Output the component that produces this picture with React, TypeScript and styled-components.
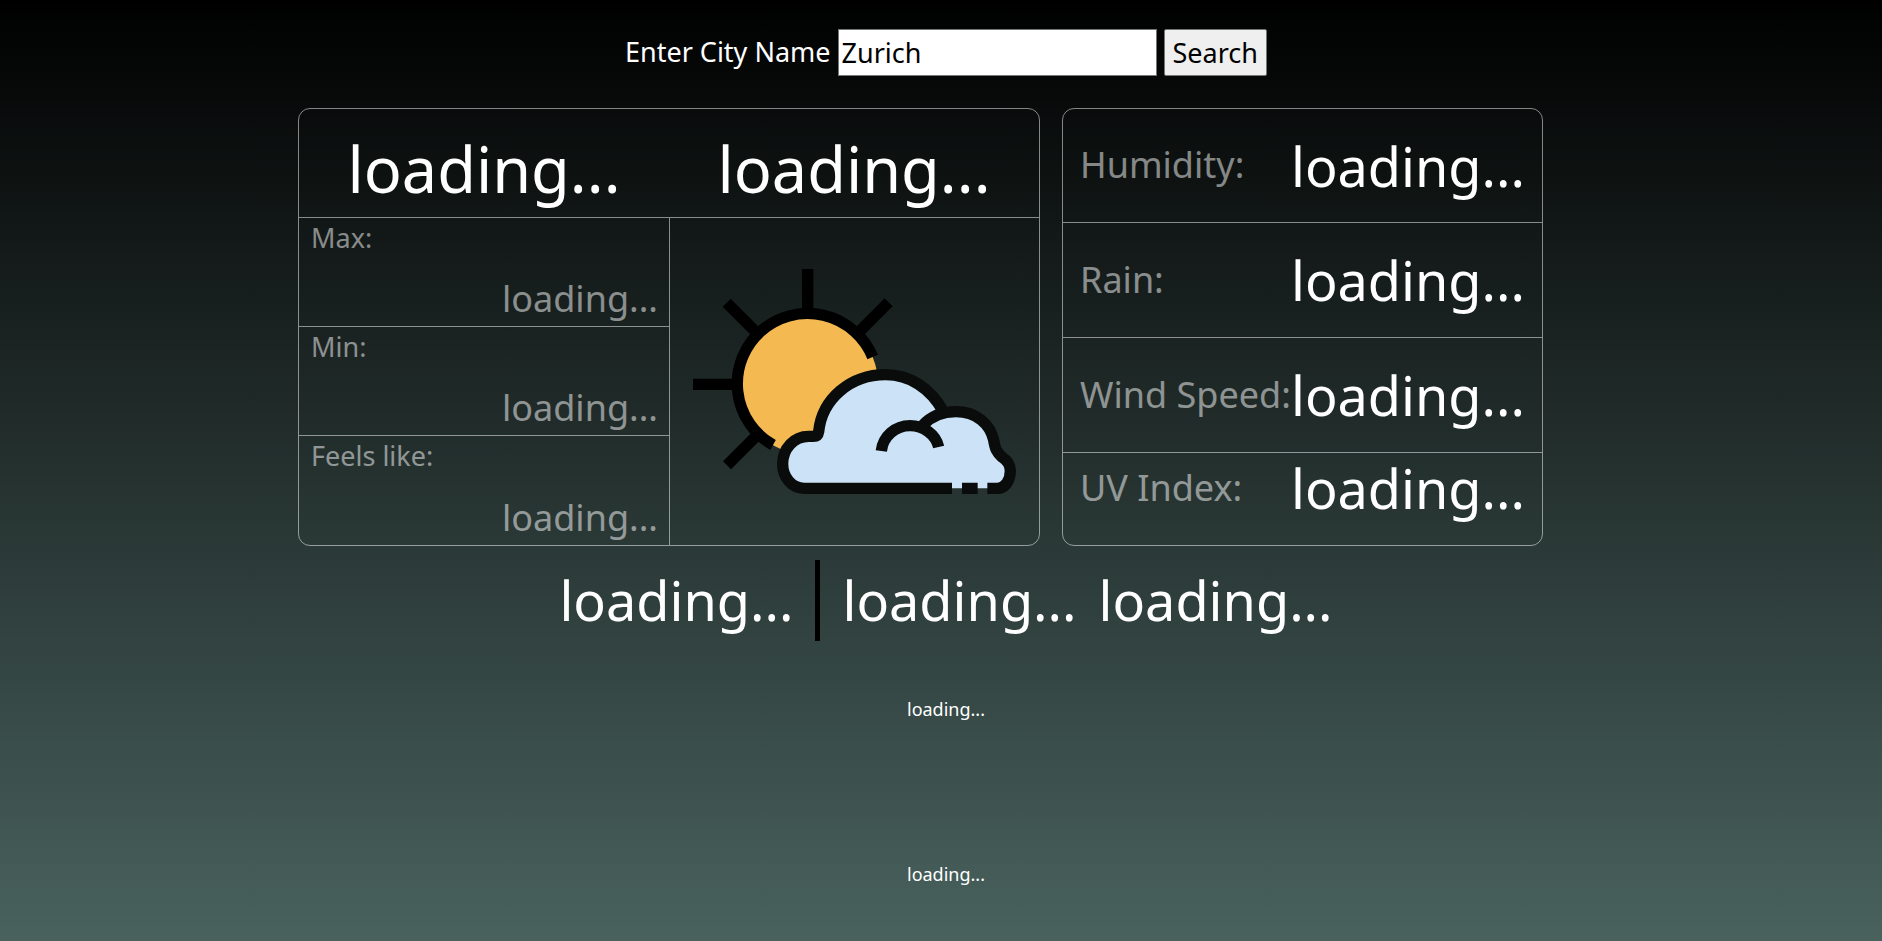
import React, { useState } from "react";
import styled, { createGlobalStyle } from "styled-components";

const line = "1px solid rgba(255, 255, 255, 0.5)";

const GlobalStyle = createGlobalStyle`
  * { box-sizing: border-box; }
  body {
    margin: 0;
    font-family: "Noto Sans", sans-serif;
    font-size: 18px;
    line-height: 25px;
    color: #fff;
  }
`;

const Page = styled.main`
  min-height: 100vh;
  padding: 29px 0 50px 10px;
  display: flex;
  flex-direction: column;
  align-items: center;
  background: linear-gradient(#000, #49625e);
`;

const SearchForm = styled.form`
  display: flex;
  align-items: center;
  gap: 7px;
  font-size: 27px;
  line-height: 37px;
`;

const CityLabel = styled.label`
  padding-bottom: 2px;
`;

const CityInput = styled.input`
  width: 319px;
  height: 47px;
  padding: 2px 3px;
  border: 1px solid #767676;
  border-radius: 0;
  background: #fff;
  color: #000;
  font: inherit;
`;

const SearchButton = styled.button`
  height: 47px;
  padding: 0 8px;
  border: 1px solid #767676;
  border-radius: 2px;
  background: #efefef;
  color: #000;
  font: inherit;
`;

const Panels = styled.div`
  width: 100%;
  max-width: 1245px;
  margin: 32px 51px 0 0;
  display: grid;
  grid-template-columns: minmax(0, 742fr) minmax(0, 481fr);
  gap: 22px;
`;

const Panel = styled.section`
  border: ${line};
  border-radius: 12px;
`;

const CurrentPanel = styled(Panel)`
  display: grid;
  grid-template-columns: 1fr 1fr;
  grid-template-rows: 109px auto;
`;

const DetailsPanel = styled(Panel)`
  display: grid;
  grid-template-rows: 114px 115px 115px 70px;
`;

const Headline = styled.header`
  grid-column: 1 / -1;
  display: grid;
  grid-template-columns: 1fr 1fr;
  align-items: center;
  padding-top: 12px;
  border-bottom: ${line};
  text-align: center;
  font-size: 63px;
  line-height: 86px;
`;

const Temperatures = styled.div`
  display: flex;
  flex-direction: column;
`;

const Temperature = styled.div`
  height: 109px;
  padding: 1px 11px 3px 12px;
  display: flex;
  flex-direction: column;
  justify-content: space-between;
  color: rgba(255, 255, 255, 0.5);
  &:not(:last-child) {
    border-bottom: ${line};
  }
`;

const TemperatureLabel = styled.span`
  font-size: 27px;
  line-height: 37px;
`;

const TemperatureValue = styled.span`
  align-self: flex-end;
  font-size: 36px;
  line-height: 49px;
`;

const Artwork = styled.div`
  display: flex;
  align-items: center;
  justify-content: center;
  border-left: ${line};
`;

const DetailRow = styled.div`
  padding: 0 17px;
  display: flex;
  align-items: center;
  justify-content: space-between;
  white-space: nowrap;
  &:not(:last-child) {
    border-bottom: ${line};
  }
`;

const DetailLabel = styled.span`
  padding-bottom: 2px;
  color: rgba(255, 255, 255, 0.5);
  font-size: 36px;
  line-height: 49px;
`;

const DetailValue = styled.span`
  font-size: 54px;
  line-height: 74px;
`;

const Place = styled.div`
  margin-top: 14px;
  display: flex;
  align-items: flex-start;
  font-size: 54px;
  line-height: 81px;
`;

const Time = styled.span`
  padding-right: 22px;
  margin-right: 22px;
  border-right: 5px solid #000;
`;

const City = styled.span`
  margin-right: 22px;
`;

const Notes = styled.div`
  margin-top: 56px;
  display: grid;
  gap: 140px;
  text-align: center;
`;

const Note = styled.p`
  margin: 0;
`;

const PartlyCloudy = () => (
  <svg width="323" height="225" viewBox="99 87 969 675" fill="none" strokeWidth="34" role="img" aria-label="Partly cloudy">
    <circle cx="443" cy="432" r="211" fill="#f5b951" />
    <g stroke="#000">
      <path d="M638 351A211 211 0 1 0 339 615" />
      <path d="M443 87V220M99 433H232M200 188L294 282M686 187L597 276M201 676L294 583" />
    </g>
    <path
      fill="#cce3f7"
      d="M433 745C394 745 368 710 368 672C368 625 402 589 446 589H460Q474 589 476 575C486 477 571 404 677 404C748 404 810 443 847 514A115 115 0 0 1 1001 600C1007 650 1051 640 1051 692C1051 721 1036 745 1012 745Z"
    />
    <g stroke="#0a0c0b">
      <path d="M876 745H433C394 745 368 710 368 672C368 625 402 589 446 589H460Q474 589 476 575C486 477 571 404 677 404C748 404 810 443 850 514" />
      <path d="M788 556C812 530 848 515 888 515C949 515 990 552 1001 600C1005 626 1009 635 1026 651C1043 662 1051 674 1051 692C1051 721 1036 745 1012 745H982" />
      <path d="M906 745H953M664 633C669 589 706 557 750 557C791 557 827 583 836 621" />
    </g>
  </svg>
);

const temperatures = ["Max:", "Min:", "Feels like:"];
const details = ["Humidity:", "Rain:", "Wind Speed:", "UV Index:"];

export default function App() {
  const [city, setCity] = useState("Zurich");
  const pending = "loading...";

  return (
    <Page>
      <GlobalStyle />
      <SearchForm onSubmit={(e: React.FormEvent) => e.preventDefault()}>
        <CityLabel htmlFor="city">Enter City Name</CityLabel>
        <CityInput
          id="city"
          type="text"
          value={city}
          onChange={(e: React.ChangeEvent<HTMLInputElement>) => setCity(e.target.value)}
        />
        <SearchButton type="submit">Search</SearchButton>
      </SearchForm>
      <Panels>
        <CurrentPanel>
          <Headline>
            <span>{pending}</span>
            <span>{pending}</span>
          </Headline>
          <Temperatures>
            {temperatures.map((label) => (
              <Temperature key={label}>
                <TemperatureLabel>{label}</TemperatureLabel>
                <TemperatureValue>{pending}</TemperatureValue>
              </Temperature>
            ))}
          </Temperatures>
          <Artwork>
            <PartlyCloudy />
          </Artwork>
        </CurrentPanel>
        <DetailsPanel>
          {details.map((label) => (
            <DetailRow key={label}>
              <DetailLabel>{label}</DetailLabel>
              <DetailValue>{pending}</DetailValue>
            </DetailRow>
          ))}
        </DetailsPanel>
      </Panels>
      <Place>
        <Time>{pending}</Time>
        <City>{pending}</City>
        <span>{pending}</span>
      </Place>
      <Notes>
        <Note>{pending}</Note>
        <Note>{pending}</Note>
      </Notes>
    </Page>
  );
}
